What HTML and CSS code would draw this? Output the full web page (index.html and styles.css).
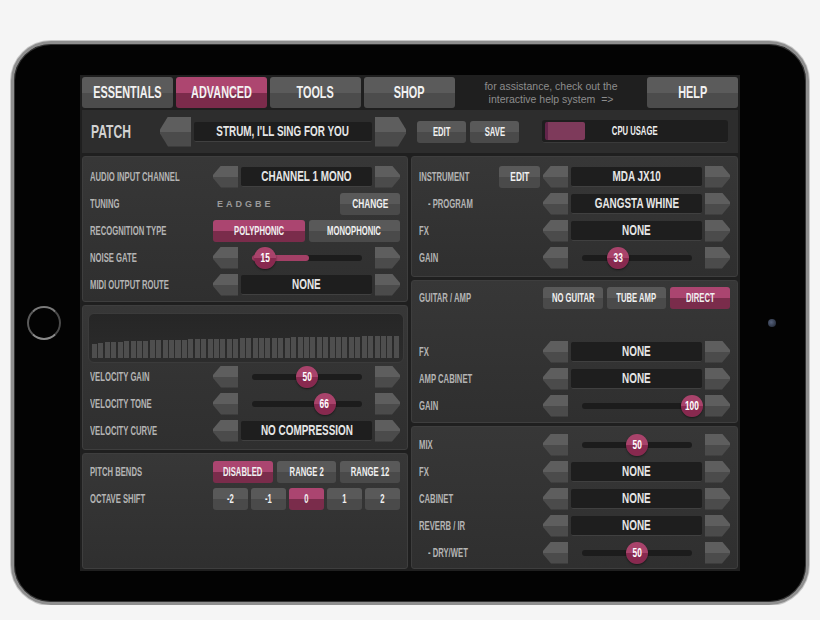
FILE: index.html
```html
<!DOCTYPE html>
<html>

<head>
    <title>MIDI Guitar - Advanced</title>

    <meta http-equiv="Content-Type" content="text/html;charset=UTF-8">
    <meta name="viewport" content="width=device-width, initial-scale=1.0">

    <link rel="stylesheet" href="styles.css">
</head>

<body>
    <div class="ipad">
        <div class="bezel bezel--left"><span class="home-button"></span></div>

        <div class="screen">
            <div class="tabs">
                <div class="tab"><span class="c">ESSENTIALS</span></div>
                <div class="tab tab--active"><span class="c">ADVANCED</span></div>
                <div class="tab"><span class="c">TOOLS</span></div>
                <div class="tab"><span class="c">SHOP</span></div>
                <p class="help-text">for assistance, check out the<br>interactive help system&nbsp; =&gt;</p>
                <div class="tab"><span class="c">HELP</span></div>
            </div>

            <div class="patch">
                <span class="patch-label c">PATCH</span>
                <span class="arrow arrow--left arrow--big"></span>
                <span class="display display--big"><span class="c">STRUM, I'LL SING FOR YOU</span></span>
                <span class="arrow arrow--right arrow--big"></span>
                <div class="btn btn--patch btn--edit"><span class="c">EDIT</span></div>
                <div class="btn btn--patch"><span class="c">SAVE</span></div>
                <div class="cpu"><span class="cpu-fill"></span><span class="c">CPU USAGE</span></div>
            </div>

            <div class="columns">
                <div class="column">
                    <section class="panel panel--input">
                        <div class="row">
                            <span class="label c">AUDIO INPUT CHANNEL</span>
                            <div class="ctrl">
                                <span class="arrow arrow--left"></span>
                                <span class="display"><span class="c">CHANNEL 1 MONO</span></span>
                                <span class="arrow arrow--right"></span>
                            </div>
                        </div>
                        <div class="row">
                            <span class="label c">TUNING</span>
                            <div class="tuning">
                                <span class="tuning-notes">EADGBE</span>
                                <div class="btn btn--change"><span class="c">CHANGE</span></div>
                            </div>
                        </div>
                        <div class="row">
                            <span class="label c">RECOGNITION TYPE</span>
                            <div class="seg seg--2">
                                <div class="btn btn--on"><span class="c">POLYPHONIC</span></div>
                                <div class="btn"><span class="c">MONOPHONIC</span></div>
                            </div>
                        </div>
                        <div class="row">
                            <span class="label c">NOISE GATE</span>
                            <div class="ctrl">
                                <span class="arrow arrow--left"></span>
                                <div class="slider">
                                    <div class="track">
                                        <span class="fill" style="width: 52%"></span>
                                        <span class="knob" style="left: 12%"><span class="c">15</span></span>
                                    </div>
                                </div>
                                <span class="arrow arrow--right"></span>
                            </div>
                        </div>
                        <div class="row">
                            <span class="label c">MIDI OUTPUT ROUTE</span>
                            <div class="ctrl">
                                <span class="arrow arrow--left"></span>
                                <span class="display"><span class="c">NONE</span></span>
                                <span class="arrow arrow--right"></span>
                            </div>
                        </div>
                    </section>

                    <section class="panel panel--velocity">
                        <div class="graph">
                            <span class="bar" style="height: 14px"></span>
                            <span class="bar" style="height: 15px"></span>
                            <span class="bar" style="height: 16px"></span>
                            <span class="bar" style="height: 16px"></span>
                            <span class="bar" style="height: 16px"></span>
                            <span class="bar" style="height: 17px"></span>
                            <span class="bar" style="height: 17px"></span>
                            <span class="bar" style="height: 17px"></span>
                            <span class="bar" style="height: 17px"></span>
                            <span class="bar" style="height: 18px"></span>
                            <span class="bar" style="height: 18px"></span>
                            <span class="bar" style="height: 18px"></span>
                            <span class="bar" style="height: 18px"></span>
                            <span class="bar" style="height: 18px"></span>
                            <span class="bar" style="height: 18px"></span>
                            <span class="bar" style="height: 19px"></span>
                            <span class="bar" style="height: 19px"></span>
                            <span class="bar" style="height: 19px"></span>
                            <span class="bar" style="height: 19px"></span>
                            <span class="bar" style="height: 19px"></span>
                            <span class="bar" style="height: 19px"></span>
                            <span class="bar" style="height: 19px"></span>
                            <span class="bar" style="height: 19px"></span>
                            <span class="bar" style="height: 20px"></span>
                            <span class="bar" style="height: 20px"></span>
                            <span class="bar" style="height: 20px"></span>
                            <span class="bar" style="height: 20px"></span>
                            <span class="bar" style="height: 20px"></span>
                            <span class="bar" style="height: 20px"></span>
                            <span class="bar" style="height: 20px"></span>
                            <span class="bar" style="height: 20px"></span>
                            <span class="bar" style="height: 21px"></span>
                            <span class="bar" style="height: 21px"></span>
                            <span class="bar" style="height: 21px"></span>
                            <span class="bar" style="height: 21px"></span>
                            <span class="bar" style="height: 21px"></span>
                            <span class="bar" style="height: 21px"></span>
                            <span class="bar" style="height: 21px"></span>
                            <span class="bar" style="height: 21px"></span>
                            <span class="bar" style="height: 21px"></span>
                            <span class="bar" style="height: 21px"></span>
                            <span class="bar" style="height: 21px"></span>
                            <span class="bar" style="height: 22px"></span>
                            <span class="bar" style="height: 22px"></span>
                            <span class="bar" style="height: 22px"></span>
                            <span class="bar" style="height: 22px"></span>
                            <span class="bar" style="height: 22px"></span>
                            <span class="bar" style="height: 22px"></span>
                        </div>
                        <div class="row">
                            <span class="label c">VELOCITY GAIN</span>
                            <div class="ctrl">
                                <span class="arrow arrow--left"></span>
                                <div class="slider">
                                    <div class="track">
                                        <span class="knob" style="left: 50%"><span class="c">50</span></span>
                                    </div>
                                </div>
                                <span class="arrow arrow--right"></span>
                            </div>
                        </div>
                        <div class="row">
                            <span class="label c">VELOCITY TONE</span>
                            <div class="ctrl">
                                <span class="arrow arrow--left"></span>
                                <div class="slider">
                                    <div class="track">
                                        <span class="knob" style="left: 66%"><span class="c">66</span></span>
                                    </div>
                                </div>
                                <span class="arrow arrow--right"></span>
                            </div>
                        </div>
                        <div class="row">
                            <span class="label c">VELOCITY CURVE</span>
                            <div class="ctrl">
                                <span class="arrow arrow--left"></span>
                                <span class="display"><span class="c">NO COMPRESSION</span></span>
                                <span class="arrow arrow--right"></span>
                            </div>
                        </div>
                    </section>

                    <section class="panel panel--pitch">
                        <div class="row">
                            <span class="label c">PITCH BENDS</span>
                            <div class="seg seg--3">
                                <div class="btn btn--on"><span class="c">DISABLED</span></div>
                                <div class="btn"><span class="c">RANGE 2</span></div>
                                <div class="btn"><span class="c">RANGE 12</span></div>
                            </div>
                        </div>
                        <div class="row">
                            <span class="label c">OCTAVE SHIFT</span>
                            <div class="seg seg--5">
                                <div class="btn"><span class="c">-2</span></div>
                                <div class="btn"><span class="c">-1</span></div>
                                <div class="btn btn--on"><span class="c">0</span></div>
                                <div class="btn"><span class="c">1</span></div>
                                <div class="btn"><span class="c">2</span></div>
                            </div>
                        </div>
                    </section>
                </div>

                <div class="column">
                    <section class="panel panel--instrument">
                        <div class="row">
                            <div class="label-cell">
                                <span class="label c">INSTRUMENT</span>
                                <div class="btn btn--small"><span class="c">EDIT</span></div>
                            </div>
                            <div class="ctrl">
                                <span class="arrow arrow--left"></span>
                                <span class="display"><span class="c">MDA JX10</span></span>
                                <span class="arrow arrow--right"></span>
                            </div>
                        </div>
                        <div class="row">
                            <span class="label label--sub c">- PROGRAM</span>
                            <div class="ctrl">
                                <span class="arrow arrow--left"></span>
                                <span class="display"><span class="c">GANGSTA WHINE</span></span>
                                <span class="arrow arrow--right"></span>
                            </div>
                        </div>
                        <div class="row">
                            <span class="label c">FX</span>
                            <div class="ctrl">
                                <span class="arrow arrow--left"></span>
                                <span class="display"><span class="c">NONE</span></span>
                                <span class="arrow arrow--right"></span>
                            </div>
                        </div>
                        <div class="row">
                            <span class="label c">GAIN</span>
                            <div class="ctrl">
                                <span class="arrow arrow--left"></span>
                                <div class="slider">
                                    <div class="track">
                                        <span class="knob" style="left: 33%"><span class="c">33</span></span>
                                    </div>
                                </div>
                                <span class="arrow arrow--right"></span>
                            </div>
                        </div>
                    </section>

                    <section class="panel panel--amp">
                        <div class="row">
                            <span class="label c">GUITAR / AMP</span>
                            <div class="seg seg--3">
                                <div class="btn"><span class="c">NO GUITAR</span></div>
                                <div class="btn"><span class="c">TUBE AMP</span></div>
                                <div class="btn btn--on"><span class="c">DIRECT</span></div>
                            </div>
                        </div>
                        <div class="row"></div>
                        <div class="row">
                            <span class="label c">FX</span>
                            <div class="ctrl">
                                <span class="arrow arrow--left"></span>
                                <span class="display"><span class="c">NONE</span></span>
                                <span class="arrow arrow--right"></span>
                            </div>
                        </div>
                        <div class="row">
                            <span class="label c">AMP CABINET</span>
                            <div class="ctrl">
                                <span class="arrow arrow--left"></span>
                                <span class="display"><span class="c">NONE</span></span>
                                <span class="arrow arrow--right"></span>
                            </div>
                        </div>
                        <div class="row">
                            <span class="label c">GAIN</span>
                            <div class="ctrl">
                                <span class="arrow arrow--left"></span>
                                <div class="slider">
                                    <div class="track">
                                        <span class="knob" style="left: 100%"><span class="c">100</span></span>
                                    </div>
                                </div>
                                <span class="arrow arrow--right"></span>
                            </div>
                        </div>
                    </section>

                    <section class="panel panel--mix">
                        <div class="row">
                            <span class="label c">MIX</span>
                            <div class="ctrl">
                                <span class="arrow arrow--left"></span>
                                <div class="slider">
                                    <div class="track">
                                        <span class="knob" style="left: 50%"><span class="c">50</span></span>
                                    </div>
                                </div>
                                <span class="arrow arrow--right"></span>
                            </div>
                        </div>
                        <div class="row">
                            <span class="label c">FX</span>
                            <div class="ctrl">
                                <span class="arrow arrow--left"></span>
                                <span class="display"><span class="c">NONE</span></span>
                                <span class="arrow arrow--right"></span>
                            </div>
                        </div>
                        <div class="row">
                            <span class="label c">CABINET</span>
                            <div class="ctrl">
                                <span class="arrow arrow--left"></span>
                                <span class="display"><span class="c">NONE</span></span>
                                <span class="arrow arrow--right"></span>
                            </div>
                        </div>
                        <div class="row">
                            <span class="label c">REVERB / IR</span>
                            <div class="ctrl">
                                <span class="arrow arrow--left"></span>
                                <span class="display"><span class="c">NONE</span></span>
                                <span class="arrow arrow--right"></span>
                            </div>
                        </div>
                        <div class="row">
                            <span class="label label--sub c">- DRY/WET</span>
                            <div class="ctrl">
                                <span class="arrow arrow--left"></span>
                                <div class="slider">
                                    <div class="track">
                                        <span class="knob" style="left: 50%"><span class="c">50</span></span>
                                    </div>
                                </div>
                                <span class="arrow arrow--right"></span>
                            </div>
                        </div>
                    </section>
                </div>
            </div>
        </div>

        <div class="bezel bezel--right"><span class="camera"></span></div>
    </div>
</body>

</html>
```

FILE: styles.css
```css
* {
    box-sizing: border-box;
}

body {
    margin: 0;
    background-color: #f5f5f5;
    font-family: "Liberation Sans", Arial, sans-serif;
}

/* condensed display type */
.c {
    display: inline-block;
    font-weight: bold;
    white-space: nowrap;
    transform: scaleX(.64);
}

/* device */

.ipad {
    display: flex;
    align-items: center;
    width: 798px;
    height: 564px;
    margin: 41px 11px 0;
    background-color: #030303;
    border: 3px solid #8e8e8e;
    border-radius: 40px;
    box-shadow: 0 0 0 1px #c8c8c8, inset 0 0 0 1px #333;
}

.bezel {
    display: flex;
    align-items: center;
    width: 66px;
}

.bezel--left {
    padding-left: 13px;
}

.bezel--right {
    padding-left: 28px;
}

.home-button {
    width: 34px;
    height: 34px;
    border-radius: 50%;
    border: 2px solid #666;
    border-color: #7a7a7a #4a4a4a #8a8a8a #5a5a5a;
}

.camera {
    width: 8px;
    height: 8px;
    border-radius: 50%;
    background: radial-gradient(circle at 40% 40%, #56627c, #1a202c);
}

/* screen */

.screen {
    display: flex;
    flex-direction: column;
    width: 660px;
    height: 496px;
    padding: 2px;
    background-color: #1f1f1f;
}

.tabs {
    display: flex;
    gap: 3px;
    height: 31px;
}

.tab {
    display: flex;
    align-items: center;
    justify-content: center;
    width: 91px;
    border-radius: 3px;
    background: linear-gradient(#5b5b5b 50%, #4c4c4c 50%);
    color: #f2f2f2;
    font-size: 17px;
}

.tab--active {
    background: linear-gradient(#ad4670 50%, #7b2b4b 50%);
}

.help-text {
    flex: 1;
    margin: 0;
    text-align: center;
    font-size: 10.5px;
    line-height: 13px;
    color: #8d8d8d;
    align-self: center;
}

.patch {
    display: flex;
    align-items: center;
    height: 43px;
    margin-top: 2px;
    padding-left: 9px;
    background-color: #2d2d2d;
}

.patch-label {
    width: 69px;
    font-size: 19px;
    color: #d2d2d2;
    transform-origin: left center;
}

.display--big {
    flex: none;
    width: 178px;
    height: 27px;
    margin: 0 3px;
    font-size: 19.5px;
}

.arrow--big {
    flex: none;
    width: 31px;
    height: 30px !important;
}

.btn--patch {
    width: 49px;
    font-size: 13px;
    margin-left: 4px;
}

.btn--edit {
    margin-left: 11px;
}

.cpu {
    position: relative;
    display: flex;
    align-items: center;
    justify-content: center;
    width: 186px;
    height: 23px;
    margin-left: 23px;
    border-radius: 3px;
    background-color: #1e1e1e;
    border-bottom: 1px solid #3a3a3a;
    color: #eee;
    font-size: 12px;
}

.cpu-fill {
    position: absolute;
    left: 3px;
    top: 2px;
    bottom: 2px;
    width: 40px;
    border-radius: 2px;
    background-color: #7e3a5b;
    border-left: 3px solid #62244a;
}

/* panels */

.columns {
    display: grid;
    grid-template-columns: 326px 327px;
    gap: 3px;
    flex: 1;
    margin-top: 3px;
}

.column {
    display: flex;
    flex-direction: column;
    gap: 3px;
}

.panel {
    padding: 6px 7px 0;
    border: 1px solid #3e3e3e;
    border-radius: 3px;
    background: linear-gradient(#373737, #2f2f2f);
}

.panel--input {
    height: 146px;
}

.panel--velocity {
    height: 145px;
    padding-top: 7px;
}

.panel--pitch {
    flex: 1;
    padding-top: 4px;
}

.panel--instrument {
    height: 121px;
}

.panel--amp {
    height: 143px;
    padding-top: 3px;
}

.panel--mix {
    flex: 1;
    padding-top: 4px;
}

.row {
    display: grid;
    grid-template-columns: minmax(0, 1fr) 187px;
    align-items: center;
    height: 27px;
}

.label {
    font-size: 12px;
    color: #b4b4b4;
    transform-origin: left center;
}

.label--sub {
    margin-left: 9px;
}

.label-cell {
    display: flex;
    align-items: center;
    justify-content: space-between;
    padding-right: 3px;
}

.ctrl {
    display: grid;
    grid-template-columns: 25px minmax(0, 1fr) 25px;
    gap: 3px;
    align-items: center;
}

.arrow {
    display: block;
    height: 22px;
    background: linear-gradient(#5e5e5e 50%, #4b4b4b 50%);
}

.arrow--left {
    clip-path: polygon(8px 0, 100% 0, 100% 100%, 8px 100%, 0 57%, 0 43%);
}

.arrow--right {
    clip-path: polygon(0 0, calc(100% - 8px) 0, 100% 43%, 100% 57%, calc(100% - 8px) 100%, 0 100%);
}

.display {
    display: flex;
    align-items: center;
    justify-content: center;
    min-width: 0;
    height: 20px;
    border-radius: 2px;
    background-color: #1e1e1e;
    border-bottom: 1px solid #404040;
    color: #e6e6e6;
    font-size: 15.5px;
}

.btn {
    display: flex;
    align-items: center;
    justify-content: center;
    min-width: 0;
    height: 22px;
    border-radius: 3px;
    background: linear-gradient(#595959 50%, #4a4a4a 50%);
    color: #f0f0f0;
    font-size: 12px;
}

.btn--on {
    background: linear-gradient(#ab4570 50%, #7a2c4b 50%);
}

.btn--small {
    width: 41px;
    font-size: 13px;
}

.btn--change {
    width: 60px;
    font-size: 13px;
}

.seg {
    display: grid;
    gap: 4px;
}

.seg--2 {
    grid-template-columns: repeat(2, minmax(0, 1fr));
}

.seg--3 {
    grid-template-columns: repeat(3, minmax(0, 1fr));
}

.seg--5 {
    grid-template-columns: repeat(5, minmax(0, 1fr));
    gap: 3px;
}

.tuning {
    display: flex;
    align-items: center;
    justify-content: space-between;
}

.tuning-notes {
    margin-left: 4px;
    font-size: 9px;
    font-weight: bold;
    letter-spacing: 3px;
    color: #9a9a9a;
}

/* sliders */

.slider {
    display: flex;
    align-items: center;
    min-width: 0;
    height: 22px;
    padding: 0 10px 0 11px;
}

.track {
    position: relative;
    flex: 1;
    height: 6px;
    border-radius: 3px;
    background-color: #1c1c1c;
}

.fill {
    position: absolute;
    left: 0;
    top: 0;
    bottom: 0;
    border-radius: 3px;
    background-color: #a34066;
}

.knob {
    position: absolute;
    top: 50%;
    display: flex;
    align-items: center;
    justify-content: center;
    width: 22px;
    height: 22px;
    margin: -11px 0 0 -11px;
    border-radius: 50%;
    background: linear-gradient(#a9436b 50%, #88294f 50%);
    box-shadow: 0 1px 2px rgba(0, 0, 0, .5);
    color: #fff;
    font-size: 13px;
}

/* velocity graph */

.graph {
    display: flex;
    align-items: flex-end;
    gap: 1.4px;
    height: 50px;
    margin: 0 -4px 0 -2px;
    padding: 0 4px 4px 3px;
    border: 1px solid #3b3b3b;
    border-radius: 6px;
    background: linear-gradient(#262626, #2c2c2c);
}

.bar {
    flex: 1;
    background-color: #4e4e4e;
}
```
